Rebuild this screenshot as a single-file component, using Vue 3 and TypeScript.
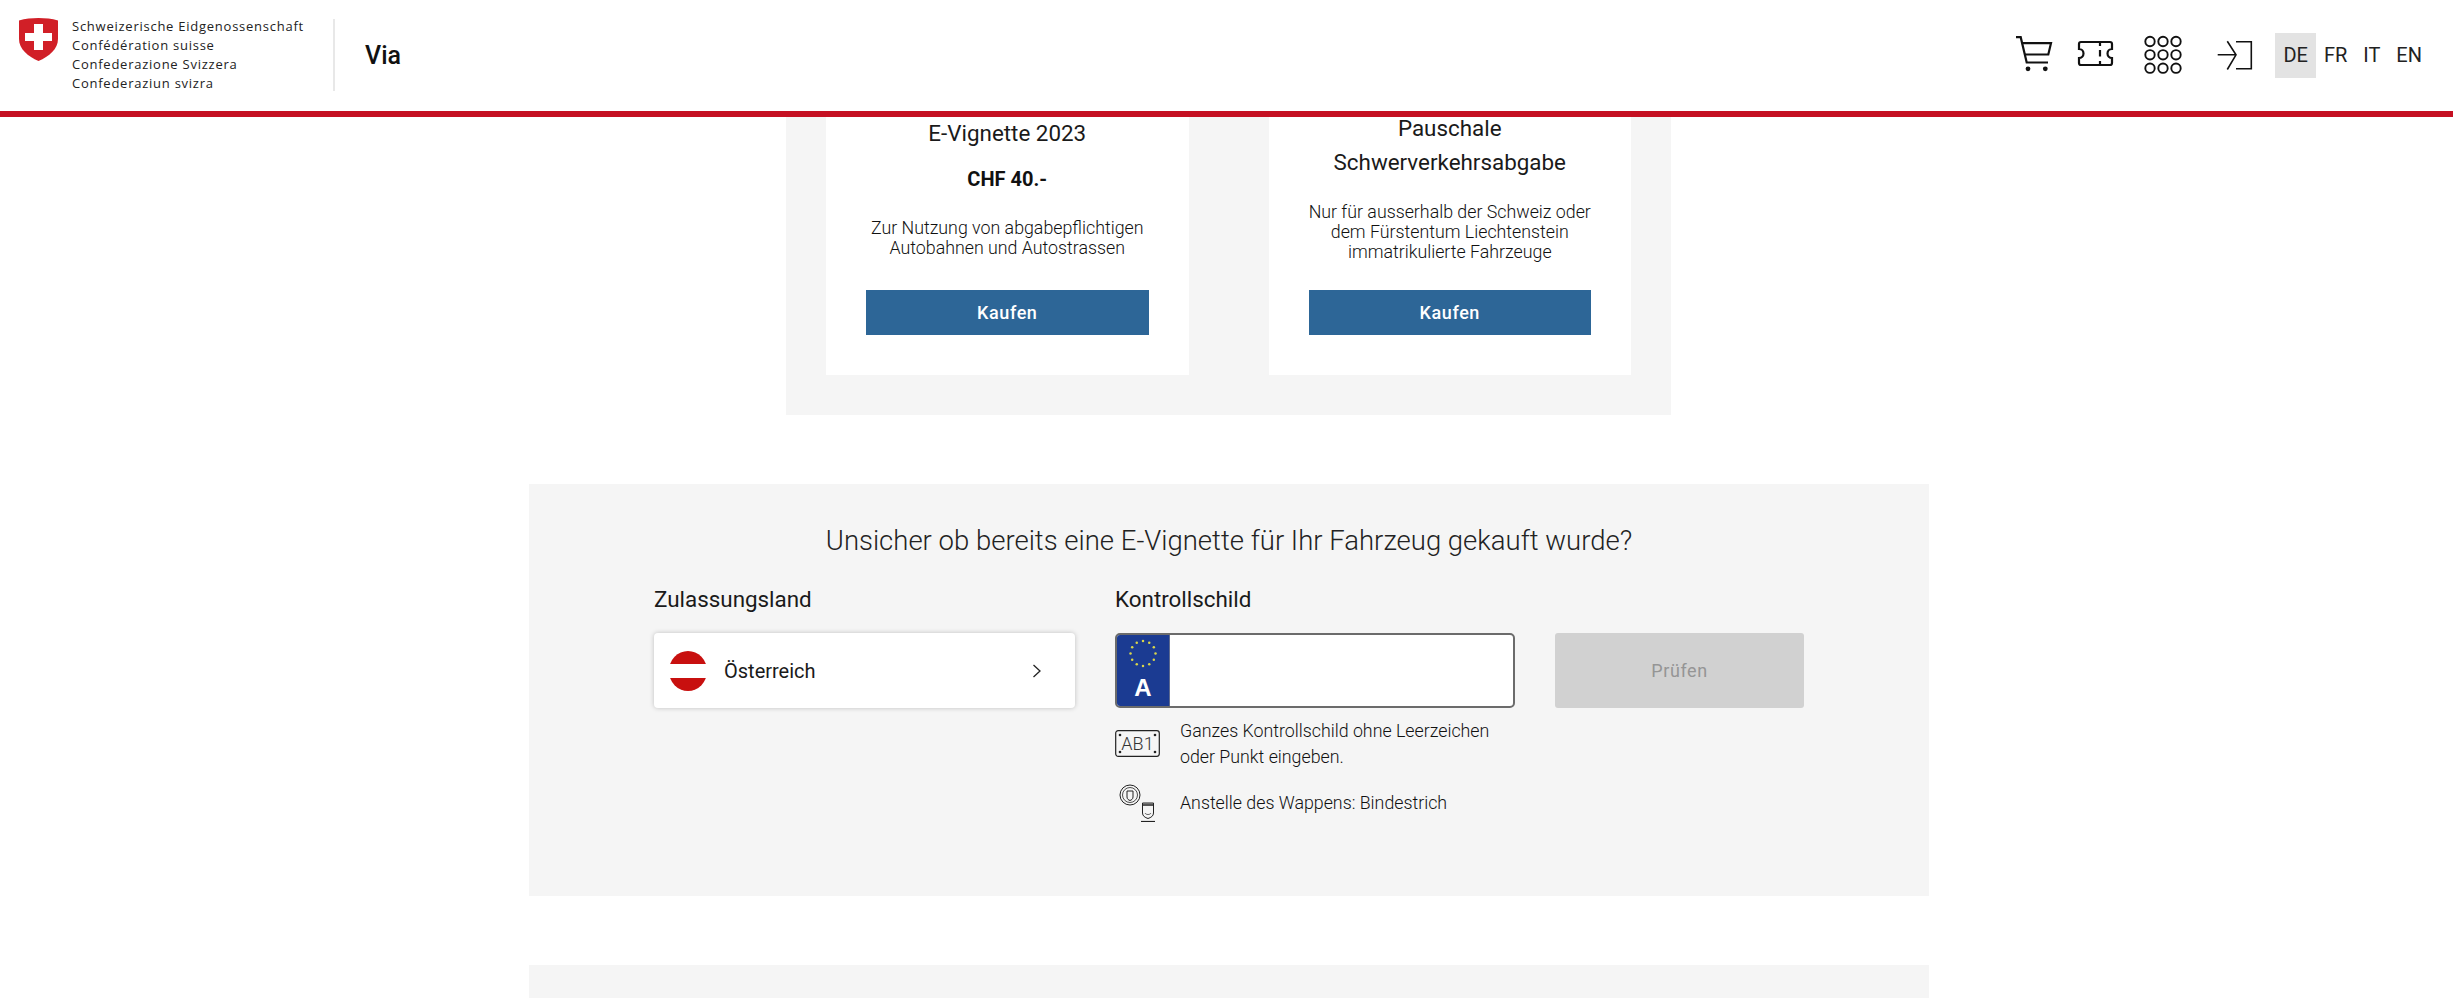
<script setup lang="ts">
const stars = Array.from({ length: 12 }, (_, i) => {
  const a = (i * Math.PI) / 6
  return { x: 26 + 12.5 * Math.sin(a), y: 18.5 - 12.5 * Math.cos(a) }
})
const langs = ['DE', 'FR', 'IT', 'EN']
const logoLines = ['Schweizerische Eidgenossenschaft', 'Confédération suisse', 'Confederazione Svizzera', 'Confederaziun svizra']
</script>

<template>
  <div class="page">
    <header class="header">
      <div class="brand">
        <svg class="shield" viewBox="0 0 39 43" width="39" height="43">
          <path d="M0 2.5C6 .7 13 0 19.5 0S33 .7 39 2.5V21C39 31 30 38.5 19.5 43C9 38.5 0 31 0 21Z" fill="#d11f27" />
          <path d="M15 6h9v9h9v8h-9v9h-9v-9H6v-8h9z" fill="#fff" />
        </svg>
        <div class="logo-text">
          <div v-for="line in logoLines" :key="line">{{ line }}</div>
        </div>
        <div class="divider"></div>
        <div class="app-name">Via</div>
      </div>
      <nav class="nav">
        <svg class="ico cart" viewBox="0 0 44 44" width="44" height="44" fill="none" stroke="#111" stroke-width="2.2">
          <path d="M4 3.2H8.7L14.7 28.5H36" />
          <path d="M9.7 9.2H39L36.3 20.5H12.3" />
          <circle cx="16" cy="34.8" r="2.4" fill="#111" stroke="none" />
          <circle cx="33.3" cy="34.8" r="2.4" fill="#111" stroke="none" />
        </svg>
        <svg class="ico ticket" viewBox="0 0 44 44" width="44" height="44" fill="none" stroke="#111" stroke-width="2.2">
          <path d="M7 8H36a2 2 0 0 1 2 2V15a4.500 4.500 0 0 0 0 9V29a2 2 0 0 1-2 2H7a2 2 0 0 1-2-2V24a4.500 4.500 0 0 0 0-9V10a2 2 0 0 1 2-2Z" />
          <path d="M26 8V12M26 16V22.500M26 27V31" />
        </svg>
        <svg class="ico grid" viewBox="0 0 44 44" width="44" height="44" fill="none" stroke="#111" stroke-width="1.9">
          <template v-for="y in [7.5, 20.8, 34.2]" :key="y">
            <circle v-for="x in [9, 22, 35]" :key="x" :cx="x" :cy="y" r="4.7" />
          </template>
        </svg>
        <svg class="ico login" viewBox="0 0 44 44" width="44" height="44" fill="none" stroke="#111" stroke-width="1.6">
          <path d="M5.7 20.8H24M15.3 7.2L24 20.8L15.3 35.500" />
          <path d="M24 7.800H39.300V34.800H24" />
        </svg>
        <div class="langs">
          <span v-for="l in langs" :key="l" class="lang" :class="{ active: l === 'DE' }">{{ l }}</span>
        </div>
      </nav>
    </header>

    <main class="main">
      <section class="offers">
        <article class="card">
          <div class="card-body">
            <h3 class="card-title">E-Vignette 2023</h3>
            <div class="price">CHF 40.-</div>
            <p class="desc">Zur Nutzung von abgabepflichtigen<br />Autobahnen und Autostrassen</p>
          </div>
          <button class="buy">Kaufen</button>
        </article>
        <article class="card">
          <div class="card-body">
            <h3 class="card-title">Pauschale<br />Schwerverkehrsabgabe</h3>
            <p class="desc">Nur für ausserhalb der Schweiz oder<br />dem Fürstentum Liechtenstein<br />immatrikulierte Fahrzeuge</p>
          </div>
          <button class="buy">Kaufen</button>
        </article>
      </section>

      <section class="check">
        <h2 class="check-title">Unsicher ob bereits eine E-Vignette für Ihr Fahrzeug gekauft wurde?</h2>
        <div class="form">
          <div class="col">
            <label class="label">Zulassungsland</label>
            <div class="select">
              <span class="flag"></span>
              <span class="country">Österreich</span>
              <svg class="chev" viewBox="0 0 10 16" width="10" height="16" fill="none" stroke="#222" stroke-width="1.3">
                <path d="M1.5 2L8 8L1.5 14" />
              </svg>
            </div>
          </div>
          <div class="col">
            <label class="label">Kontrollschild</label>
            <div class="plate">
              <div class="eu">
                <svg viewBox="0 0 52 40" width="52" height="40">
                  <circle v-for="(s, i) in stars" :key="i" :cx="s.x" :cy="s.y" r="1.25" fill="#d9d64a" />
                </svg>
                <span class="eu-code">A</span>
              </div>
              <input class="plate-input" type="text" aria-label="Kontrollschild" />
            </div>
            <div class="hint first">
              <svg class="hint-ico" viewBox="0 0 45 28" width="45" height="28" fill="none">
                <rect x="0.7" y="0.7" width="43.6" height="25.6" rx="2.5" stroke="#222" stroke-width="1.2" />
                <circle cx="5" cy="5" r="1.3" fill="#222" /><circle cx="40" cy="5" r="1.3" fill="#222" />
                <circle cx="5" cy="22" r="1.3" fill="#222" /><circle cx="40" cy="22" r="1.3" fill="#222" />
                <text x="22.500" y="20" text-anchor="middle" class="ab1">AB1</text>
              </svg>
              <span>Ganzes Kontrollschild ohne Leerzeichen<br />oder Punkt eingeben.</span>
            </div>
            <div class="hint">
              <svg class="hint-ico tall" viewBox="0 0 45 38" width="45" height="38" fill="none" stroke="#222">
                <circle cx="15" cy="11" r="10" stroke-width="1" />
                <circle cx="15" cy="11" r="7.500" stroke-width="0.8" />
                <path d="M12 7H18V13C18 15 16.500 16 15 16.500C13.500 16 12 15 12 13Z" stroke-width="1" />
                <path d="M27.500 19H38.500V29C38.500 32 36 33.500 33 34.500C30 33.500 27.500 32 27.500 29Z" stroke-width="1" />
                <path d="M28 19.500H38V22H28Z" fill="#555" stroke="none" />
                <path d="M30 29C31 31 35 31 36 29" stroke-width="0.7" />
                <path d="M26 37.500H40" stroke-width="1.2" />
              </svg>
              <span>Anstelle des Wappens: Bindestrich</span>
            </div>
          </div>
          <div class="col action">
            <button class="verify" disabled>Prüfen</button>
          </div>
        </div>
      </section>

      <section class="next"></section>
    </main>
  </div>
</template>

<style>
html, body { margin: 0; background: #fff; overflow: hidden; }
</style>

<style scoped>
.page {
  position: relative;
  height: 998px;
  overflow: hidden;
  font-family: Roboto, "Liberation Sans", sans-serif;
  color: #1a1a1a;
}
.header {
  position: absolute;
  top: 0;
  left: 0;
  right: 0;
  z-index: 2;
  height: 111px;
  background: #fff;
  border-bottom: 6px solid #c51022;
  display: flex;
  align-items: center;
  justify-content: space-between;
  padding: 0 23px 0 19px;
}
.brand { display: flex; align-items: center; height: 100%; }
.shield { align-self: flex-start; margin-top: 18px; flex: none; }
.logo-text {
  margin: -2px 0 0 14px;
  font-family: "Open Sans", "Noto Sans", sans-serif;
  font-size: 13px;
  line-height: 19px;
  letter-spacing: 0.75px;
  color: #222;
  white-space: nowrap;
  width: 261px;
}
.divider { width: 2px; height: 72px; background: #e8e8e8; margin: -2px 30px 0 0; }
.app-name { font-size: 25px; font-weight: 500; color: #111; }
.nav { display: flex; align-items: center; }
.ico { display: block; flex: none; }
.ticket { margin-left: 18px; }
.grid { margin-left: 23px; }
.login { margin-left: 27px; }
.langs { display: flex; margin-left: 19px; }
.lang {
  height: 45px;
  line-height: 45px;
  padding: 0 8px;
  font-size: 20px;
  color: #222;
}
.lang.active { background: #e3e3e3; }
.main { display: flex; flex-direction: column; align-items: center; padding-left: 5px; }
.offers {
  width: 885px;
  box-sizing: border-box;
  margin-right: 1px;
  padding: 0 40px 40px;
  background: #f5f5f5;
  display: grid;
  grid-template-columns: minmax(0, 1fr) minmax(0, 1fr);
  column-gap: 80px;
}
.card {
  height: 375px;
  box-sizing: border-box;
  background: #fff;
  padding: 104px 40px 40px;
  display: flex;
  flex-direction: column;
  text-align: center;
}
.card-body { flex: 1; display: flex; flex-direction: column; justify-content: center; margin-bottom: 21px; }
.card-title { margin: 0 0 1px; font-size: 22.4px; line-height: 34px; font-weight: 400; }
.price { margin: 16px 0 5px; font-size: 20px; line-height: 24px; font-weight: 700; color: #111; }
.desc { margin: 22px 0 0; font-size: 17.8px; line-height: 20px; font-weight: 300; color: #111; white-space: nowrap; }
.buy {
  height: 45px;
  border: 0;
  background: #2d6697;
  color: #fff;
  font: 500 18px Roboto, sans-serif;
  letter-spacing: 0.6px;
  padding: 0;
}
.check {
  margin-top: 69px;
  width: 1400px;
  height: 412px;
  box-sizing: border-box;
  padding: 41px 125px 0;
  background: #f5f5f5;
}
.check-title {
  margin: 0 0 28px;
  text-align: center;
  font-size: 27.5px;
  line-height: 32px;
  font-weight: 300;
  color: #222;
}
.form { display: grid; grid-template-columns: 421px 400px 249px; column-gap: 40px; }
.label { display: block; font-size: 22.4px; line-height: 28px; margin-bottom: 20px; }
.select {
  height: 75px;
  box-sizing: border-box;
  background: #fff;
  border-radius: 4px;
  box-shadow: 0 0 5px rgba(0, 0, 0, 0.22);
  display: flex;
  align-items: center;
  padding: 0 33px 0 15px;
}
.flag {
  width: 38px;
  height: 40px;
  border-radius: 50%;
  flex: none;
  background: linear-gradient(#c8100f 0 32%, #fff 32% 68%, #c8100f 68% 100%);
}
.country { margin-left: 17px; font-size: 20px; flex: 1; }
.plate {
  height: 75px;
  box-sizing: border-box;
  border: 2px solid #6b6b6b;
  border-radius: 5px;
  background: #fff;
  display: flex;
  overflow: hidden;
}
.eu {
  width: 52px;
  flex: none;
  background: #1b3b92;
  border-right: 1px solid #5d6a8f;
  display: flex;
  flex-direction: column;
  align-items: center;
}
.eu svg { display: block; }
.eu-code { margin-top: 1px; font: 700 24px/24px "Liberation Sans", sans-serif; color: #fff; }
.plate-input { flex: 1; min-width: 0; border: 0; outline: 0; background: transparent; }
.hint {
  display: flex;
  align-items: center;
  gap: 20px;
  margin-top: 20px;
  font-size: 17.8px;
  line-height: 26px;
  font-weight: 300;
  color: #111;
  white-space: nowrap;
}
.hint.first { margin-top: 10px; }
.hint-ico { flex: none; }
.hint-ico.tall { margin: -6px 0; }
.ab1 { font: 300 18px Roboto, sans-serif; fill: #333; stroke: none; }
.action { padding-top: 48px; }
.verify {
  width: 100%;
  height: 75px;
  border: 0;
  border-radius: 3px;
  background: #d1d1d1;
  color: #959595;
  font: 400 18px Roboto, sans-serif;
  letter-spacing: 0.6px;
}
.next {
  margin-top: 69px;
  width: 1400px;
  height: 200px;
  background: #f5f5f5;
}
</style>
